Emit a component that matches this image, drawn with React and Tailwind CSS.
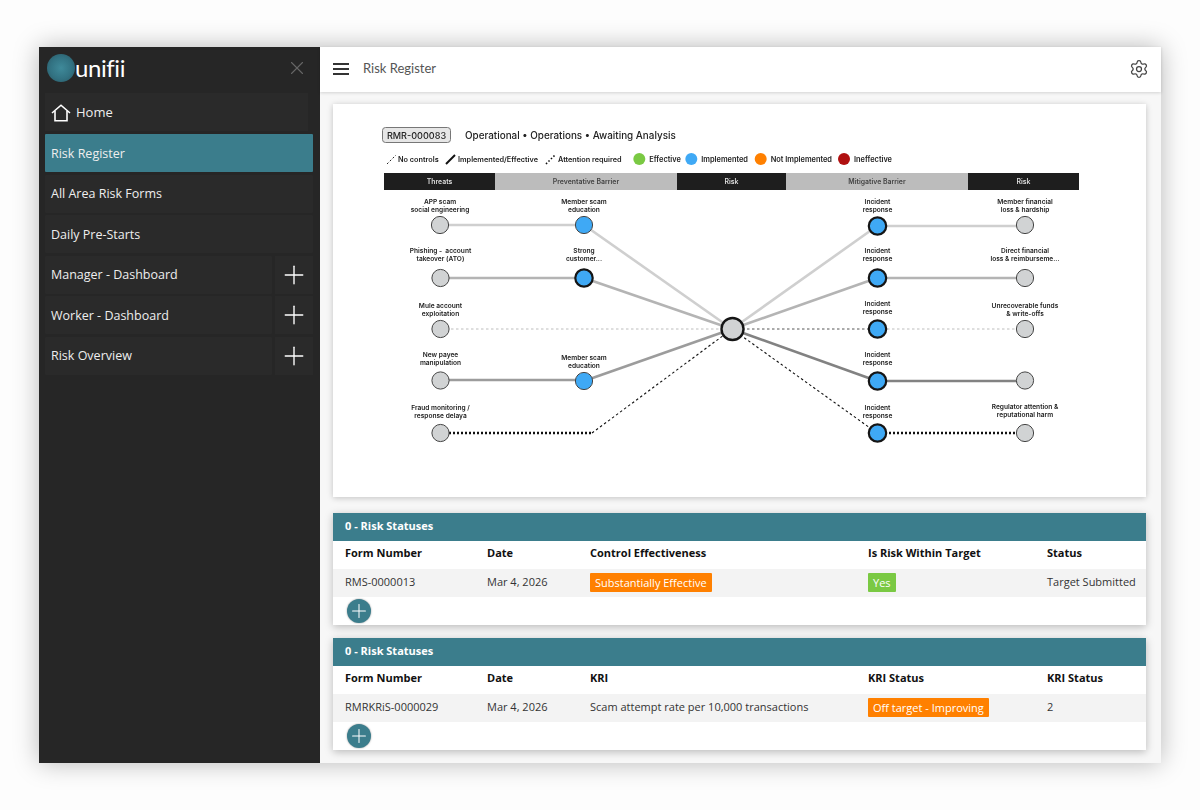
import React from 'react';
import { Settings, Plus, X } from 'lucide-react';

const NAV = [
  { label: 'Risk Register', active: true },
  { label: 'All Area Risk Forms' },
  { label: 'Daily Pre-Starts' },
  { label: 'Manager - Dashboard', expand: true },
  { label: 'Worker - Dashboard', expand: true },
  { label: 'Risk Overview', expand: true },
];

const LINES = [
  { x1: 440, y1: 225, x2: 584, y2: 225, color: '#cfcfcf', w: 2.6 },
  { x1: 584, y1: 225, x2: 732, y2: 329, color: '#cfcfcf', w: 2.6 },
  { x1: 440, y1: 278, x2: 584, y2: 278, color: '#b4b4b4', w: 2.6 },
  { x1: 584, y1: 278, x2: 732, y2: 329, color: '#b4b4b4', w: 2.6 },
  { x1: 441, y1: 329, x2: 732, y2: 329, color: '#bdbdbd', w: 1, dash: '2.5 2.5' },
  { x1: 441, y1: 380, x2: 584, y2: 380, color: '#9c9c9c', w: 2.6 },
  { x1: 584, y1: 381, x2: 732, y2: 329, color: '#9c9c9c', w: 2.6 },
  { x1: 441, y1: 433, x2: 592, y2: 433, color: '#111', w: 2.4, dash: '2 2' },
  { x1: 592, y1: 433, x2: 732, y2: 329, color: '#111', w: 1.1, dash: '2.5 2.5' },
  { x1: 732, y1: 329, x2: 877, y2: 226, color: '#cfcfcf', w: 2.6 },
  { x1: 877, y1: 226, x2: 1025, y2: 226, color: '#cfcfcf', w: 2.6 },
  { x1: 732, y1: 329, x2: 877, y2: 278, color: '#b4b4b4', w: 2.6 },
  { x1: 877, y1: 278, x2: 1025, y2: 278, color: '#b4b4b4', w: 2.6 },
  { x1: 732, y1: 329, x2: 877, y2: 329, color: '#555', w: 1, dash: '2.5 2.5' },
  { x1: 877, y1: 329, x2: 1025, y2: 329, color: '#bdbdbd', w: 1, dash: '2.5 2.5' },
  { x1: 732, y1: 329, x2: 877, y2: 381, color: '#828282', w: 2.6 },
  { x1: 877, y1: 381, x2: 1025, y2: 381, color: '#828282', w: 2.6 },
  { x1: 732, y1: 329, x2: 877, y2: 433, color: '#111', w: 1.1, dash: '2.5 2.5' },
  { x1: 877, y1: 433, x2: 1025, y2: 433, color: '#111', w: 2.4, dash: '2 2' },
];

// ly = baseline of the first label line
const NODES = [
  { x: 440, y: 225, ly: 204, t: ['APP scam', 'social engineering'] },
  { x: 440.5, y: 278, ly: 252.5, t: ['Phishing -  account', 'takeover (ATO)'] },
  { x: 440.5, y: 329, ly: 307.6, t: ['Mule account', 'exploitation'] },
  { x: 440.5, y: 380.5, ly: 356.6, t: ['New payee', 'manipulation'] },
  { x: 440.5, y: 433, ly: 409.6, t: ['Fraud monitoring /', 'response delaya'] },
  { x: 584, y: 225, ly: 204, blue: true, t: ['Member scam', 'education'] },
  { x: 584, y: 278, ly: 252.5, blue: true, bold: true, t: ['Strong', 'customer...'] },
  { x: 584, y: 381, ly: 360, blue: true, t: ['Member scam', 'education'] },
  { x: 877.5, y: 226, ly: 204, blue: true, bold: true, t: ['Incident', 'response'] },
  { x: 877.5, y: 278, ly: 253, blue: true, bold: true, t: ['Incident', 'response'] },
  { x: 877.5, y: 329, ly: 306, blue: true, bold: true, t: ['Incident', 'response'] },
  { x: 877.5, y: 381, ly: 356.6, blue: true, bold: true, t: ['Incident', 'response'] },
  { x: 877.5, y: 433, ly: 410.3, blue: true, bold: true, t: ['Incident', 'response'] },
  { x: 1025, y: 225, ly: 204, t: ['Member financial', 'loss & hardship'] },
  { x: 1025, y: 278, ly: 252.5, t: ['Direct financial', 'loss & reimburseme...'] },
  { x: 1025, y: 329, ly: 307.6, t: ['Unrecoverable funds', '& write-offs'] },
  { x: 1025, y: 380.5 },
  { x: 1025, y: 433, ly: 409, t: ['Regulator attention &', 'reputational harm'] },
];

const BANDS = [
  { x: 384, w: 111, label: 'Threats', dark: true },
  { x: 495, w: 182, label: 'Preventative Barrier' },
  { x: 677, w: 109, label: 'Risk', dark: true },
  { x: 786, w: 182, label: 'Mitigative Barrier' },
  { x: 968, w: 111, label: 'Risk', dark: true },
];

const LEGEND_DOTS = [
  { x: 639.3, color: '#7ac943', label: 'Effective' },
  { x: 691.3, color: '#3fa9f5', label: 'Implemented' },
  { x: 760.7, color: '#ff8000', label: 'Not Implemented' },
  { x: 844, color: '#b01010', label: 'Ineffective' },
];

const BowTie = () => (
  <svg viewBox="333 104 813 393" className="block w-full h-full blur-[0.3px] [font-family:Inter,sans-serif]">
    <rect x="382.5" y="127.5" width="68" height="15" rx="3" fill="#e6e6e6" stroke="#777" />
    <text x="416.5" y="138.5" textAnchor="middle" fontSize="9.1" fontWeight="500" fill="#222">RMR-000083</text>
    <text x="465" y="139" fontSize="9.9" fontWeight="500" fill="#222">Operational • Operations • Awaiting Analysis</text>

    <line x1="387" y1="164" x2="396" y2="155" stroke="#222" strokeWidth="1" strokeDasharray="2 2" />
    <text x="398" y="162" fontSize="7.3" fontWeight="600" fill="#222">No controls</text>
    <line x1="446" y1="164" x2="455" y2="155" stroke="#111" strokeWidth="2" />
    <text x="458" y="162" fontSize="7.3" fontWeight="600" fill="#222">Implemented/Effective</text>
    <line x1="546" y1="164" x2="555" y2="155" stroke="#111" strokeWidth="1.6" strokeDasharray="1.5 2" />
    <text x="558" y="162" fontSize="7.3" fontWeight="600" fill="#222">Attention required</text>
    {LEGEND_DOTS.map(d => (
      <g key={d.label}>
        <circle cx={d.x} cy="159" r="6" fill={d.color} />
        <text x={d.x + 10} y="162" fontSize="7.4" fontWeight="600" fill="#222">{d.label}</text>
      </g>
    ))}

    {BANDS.map(b => (
      <g key={b.x}>
        <rect x={b.x} y="173" width={b.w} height="17" fill={b.dark ? '#1e1e1e' : '#bcbcbc'} />
        <text x={b.x + b.w / 2} y="184" textAnchor="middle" fontSize="6.9" fontWeight="600" fill={b.dark ? '#ddd' : '#444'}>{b.label}</text>
      </g>
    ))}

    {LINES.map((l, i) => (
      <line key={i} x1={l.x1} y1={l.y1} x2={l.x2} y2={l.y2} stroke={l.color} strokeWidth={l.w} strokeDasharray={l.dash} />
    ))}

    {NODES.map((n, i) => (
      <g key={i}>
        <circle cx={n.x} cy={n.y} r={n.bold ? 8.7 : 8.6} fill={n.blue ? '#3fa9f5' : '#d1d3d4'} stroke={n.blue && n.bold ? '#151515' : '#444'} strokeWidth={n.bold ? 2.2 : 1} />
        {n.t && n.t.map((line, j) => (
          <text key={j} x={n.x} y={n.ly + j * 8} textAnchor="middle" fontSize="6.6" fontWeight="600" fill="#222" xmlSpace="preserve">{line}</text>
        ))}
      </g>
    ))}
    <circle cx="732.5" cy="329" r="11" fill="#d1d3d4" stroke="#151515" strokeWidth="2.4" />
  </svg>
);

const StatusTable = ({ columns, row }) => (
  <div className="bg-white shadow-[0_2px_8px_rgba(0,0,0,0.25)]">
    <div className="h-7 bg-[#3b7d8c] pl-[12px] pb-[1px] flex items-center text-white text-[11px] font-bold">0 - Risk Statuses</div>
    <div className="grid grid-cols-[142px_103px_278px_179px_1fr] pl-[12px] h-7 pb-[4px] items-center text-[11px] font-bold text-[#111]">
      {columns.map((c, i) => <div key={i}>{c}</div>)}
    </div>
    <div className="grid grid-cols-[142px_103px_278px_179px_1fr] pl-[12px] h-7 pb-[2px] items-center text-[11px] text-[#333] bg-[#f3f3f3]">
      {row.map((c, i) => (
        <div key={i}>
          {c.badge ? (
            <span className={`inline-block px-[5px] h-[19px] leading-[19px] text-white rounded-[1px] ${c.badge}`}>{c.text}</span>
          ) : c}
        </div>
      ))}
    </div>
    <div className="h-7 pl-[14px] flex items-center">
      <button className="w-6 h-6 rounded-full bg-[#3b7d8c] flex items-center justify-center shadow-[0_0_2px_rgba(0,0,0,0.4)]">
        <Plus size={22} strokeWidth={1.1} color="#fff" />
      </button>
    </div>
  </div>
);

const App = () => {
  return (
    <div className="h-[810px] w-[1200px] bg-[#fdfdfd] pt-[47px] pl-[39px] overflow-hidden [font-family:'Open_Sans',sans-serif]">
      <div className="w-[1122px] h-[716px] flex shadow-[0_0_24px_rgba(0,0,0,0.28)]">
        {/* Sidebar */}
        <aside className="w-[281px] shrink-0 bg-[#262626] text-[#eee] text-[12.5px] pl-[6px] pr-[7px]">
          <div className="h-[42px] flex items-center pl-[2px] pr-[5px] justify-between">
            <div className="flex items-center">
              <div className="w-[28px] h-[28px] rounded-full bg-[radial-gradient(circle,#3f8a9a_0%,#327282_55%,#2a5560_100%)]" />
              <span className="text-[24px] leading-none text-white [font-family:Lato,sans-serif] tracking-[-0.4px]">unifii</span>
            </div>
            <X size={22} strokeWidth={1.2} color="#666" />
          </div>
          <div className="h-[38px] mt-[4px] mr-[5px] bg-[#2a2a2a] flex items-center pl-[6px] pt-[1px] text-[13px]">
            <svg width="20" height="18" viewBox="0 0 20 18" fill="none" stroke="#fff" strokeWidth="1.6" className="mr-[5px]">
              <path d="M1 9 L10 1.2 L19 9" />
              <path d="M4 7 V16.8 H16 V7" />
            </svg>
            Home
          </div>
          <div className="flex flex-col gap-[2.5px] mt-[3.4px]">
            {NAV.map(item => (
              <div key={item.label} className="flex gap-[3px] h-[38px]">
                <div className={`flex-1 flex items-center pl-[6px] pt-[1px] rounded-[1px] ${item.active ? 'bg-[#3b7d8c]' : 'bg-[#2a2a2a]'}`}>{item.label}</div>
                {item.expand && (
                  <div className="w-[38px] bg-[#2a2a2a] flex items-center justify-center">
                    <Plus size={30} strokeWidth={1.1} color="#fff" />
                  </div>
                )}
              </div>
            ))}
          </div>
        </aside>

        {/* Main */}
        <main className="flex-1 bg-[#f7f7f7] flex flex-col">
          <header className="h-[45px] shrink-0 bg-white shadow-[0_1px_3px_rgba(0,0,0,0.15)] flex items-center pl-[13px] pr-[12px] pb-[2px]">
            <svg width="16" height="12" viewBox="0 0 16 12" stroke="#333" strokeWidth="1.8" className="mr-[14px]">
              <path d="M0 1H16M0 6H16M0 11H16" />
            </svg>
            <span className="text-[13px] text-[#555] [font-family:Lato,sans-serif]">Risk Register</span>
            <Settings size={20} strokeWidth={1.5} color="#444" className="ml-auto" />
          </header>
          <div className="pl-[13px] pr-[15px] pt-[12px] flex flex-col">
            <div className="h-[393px] bg-white shadow-[0_1px_6px_rgba(0,0,0,0.22)]">
              <BowTie />
            </div>
            <div className="mt-4">
              <StatusTable
                columns={['Form Number', 'Date', 'Control Effectiveness', 'Is Risk Within Target', 'Status']}
                row={['RMS-0000013', 'Mar 4, 2026', { text: 'Substantially Effective', badge: 'bg-[#ff8000]' }, { text: 'Yes', badge: 'bg-[#7ac943]' }, 'Target Submitted']}
              />
            </div>
            <div className="mt-[13px]">
              <StatusTable
                columns={['Form Number', 'Date', 'KRI', 'KRI Status', 'KRI Status']}
                row={['RMRKRiS-0000029', 'Mar 4, 2026', 'Scam attempt rate per 10,000 transactions', { text: 'Off target - Improving', badge: 'bg-[#ff8000]' }, '2']}
              />
            </div>
          </div>
        </main>
      </div>
    </div>
  );
};

export default App;
